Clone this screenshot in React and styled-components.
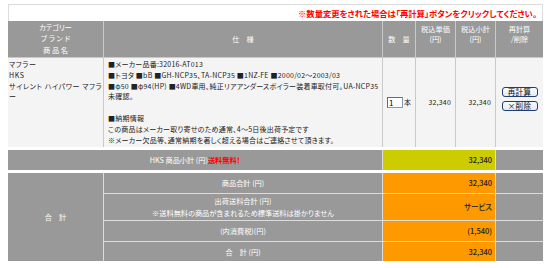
import React from "react";
import styled, { createGlobalStyle } from "styled-components";

const Global = createGlobalStyle`
  html, body { margin: 0; padding: 0; background: #fff; }
  body {
    font-family: "Noto Sans CJK JP", "Liberation Sans", sans-serif;
    font-feature-settings: "palt";
    font-size: 7.5px;
    color: #222;
  }
`;

const Page = styled.div`
  padding: 4px 7px 0 8px;
  width: 535px;
`;

const Notice = styled.div`
  height: 17px;
  box-sizing: border-box;
  border: 1px solid #dcdcdc;
  border-bottom: none;
  background: #fff;
  display: flex;
  align-items: center;
  justify-content: flex-end;
  padding-right: 5px;
  color: #f00;
  font-weight: bold;
  font-size: 8.3px;
`;

const Grid = styled.div`
  display: grid;
  grid-template-columns: 95px 278px 32px 39px 39px 47px;
  gap: 1px;
  background: ${(p) => p.$line || "#d6d6d6"};
  margin-top: ${(p) => p.$top || 0}px;
`;

const Head = styled.div`
  background: #999;
  color: #fff;
  height: 36px;
  display: flex;
  align-items: center;
  justify-content: center;
  text-align: center;
  line-height: ${(p) => p.$lh || 10}px;
  padding-bottom: ${(p) => p.$lift || 0}px;
  box-sizing: border-box;
  font-size: 7.2px;
`;

const Cell = styled.div`
  background: #f4f4f4;
  height: 89px;
  box-sizing: border-box;
  padding: 1px ${(p) => p.$pad ?? 2}px;
  line-height: 10.8px;
  font-size: 7px;
  letter-spacing: ${(p) => p.$ls ?? 0.22}px;
  white-space: nowrap;
  overflow: hidden;
`;

const MidCell = styled(Cell)`
  display: flex;
  align-items: center;
  justify-content: ${(p) => p.$justify || "flex-end"};
  padding: 0 ${(p) => p.$pr ?? 4}px 0 ${(p) => p.$pl ?? 0}px;
  letter-spacing: 0.2px;
`;

const Qty = styled.div`
  width: 16px;
  height: 11px;
  box-sizing: border-box;
  border: 1px solid #7f9db9;
  border-top-color: #5a6e8a;
  border-left-color: #5a6e8a;
  background: #fff;
  font-size: 8px;
  line-height: 9px;
  padding-left: 1px;
  margin-right: 1px;
  color: #000;
`;

const ButtonCol = styled(Cell)`
  display: flex;
  flex-direction: column;
  align-items: center;
  justify-content: center;
  gap: 4px;
  padding: 0 0 8px;
`;

const Btn = styled.button`
  width: 36px;
  height: 10px;
  padding: 0;
  border: 1px solid #1f3d6e;
  border-radius: 3px;
  background: linear-gradient(#fbfcff, #e4e9f3);
  font-family: inherit;
  font-feature-settings: "palt";
  font-size: 7.5px;
  line-height: 8px;
  letter-spacing: 0.3px;
  color: #111;
`;

const Band = styled.div`
  background: ${(p) => p.$bg || "#999"};
  height: ${(p) => p.$h || 20}px;
  grid-column: ${(p) => p.$col || "auto"};
  grid-row: ${(p) => p.$row || "auto"};
  display: flex;
  align-items: center;
  justify-content: ${(p) => p.$justify || "center"};
  text-align: center;
  padding-right: ${(p) => p.$pr || 0}px;
  color: ${(p) => p.$color || "#fff"};
  line-height: 12px;
  font-size: 7.2px;
  box-sizing: border-box;
`;

const Red = styled.span`
  color: #f00;
  font-weight: bold;
`;

const Value = styled.span`
  color: #222;
  font-weight: 500;
  font-size: 7.5px;
`;

export default function App() {
  return (
    <>
      <Global />
      <Page>
        <Notice>※数量変更をされた場合は「再計算」ボタンをクリックしてください。</Notice>
        <Grid $line="#c9c9c9">
          <Head $lh={11.5}>
            カテゴリー
            <br />
            ブ ラ ン ド
            <br />
            商 品 名
          </Head>
          <Head>仕　様</Head>
          <Head>数　量</Head>
          <Head $lift={10}>
            税込単価
            <br />
            (円)
          </Head>
          <Head $lift={10}>
            税込小計
            <br />
            (円)
          </Head>
          <Head $lift={10}>
            再計算
            <br />
            /削除
          </Head>

          <Cell $pad={1} $ls={0.6}>
            マフラー
            <br />
            HKS
            <br />
            サイレント ハイパワー マフラ
            <br />ー
          </Cell>
          <Cell $pad={4}>
            ■メーカー品番:32016-AT013
            <br />
            ■トヨタ ■bB ■GH-NCP35、TA-NCP35 ■1NZ-FE ■2000/02～2003/03
            <br />
            ■φ50 ■φ94(HP) ■4WD車用、純正リアアンダースポイラー装着車取付可。UA-NCP35
            <br />
            未確認。
            <br />
            <br />
            ■納期情報
            <br />
            この商品はメーカー取り寄せのため通常、4～5日後出荷予定です
            <br />
            ※メーカー欠品等、通常納期を著しく超える場合はご連絡させて頂きます。
          </Cell>
          <MidCell $justify="flex-start" $pl={4} $pr={0}>
            <Qty>1</Qty>
            <span>本</span>
          </MidCell>
          <MidCell>32,340</MidCell>
          <MidCell>32,340</MidCell>
          <ButtonCol>
            <Btn>再計算</Btn>
            <Btn>×削除</Btn>
          </ButtonCol>
        </Grid>

        <Grid $line="#dcdcdc" $top={3}>
          <Band $col="span 2" $h={20}>
            HKS 商品小計 (円)<Red>送料無料！</Red>
          </Band>
          <Band $col="span 3" $bg="#cccc00" $justify="flex-end" $pr={3}>
            <Value>32,340</Value>
          </Band>
          <Band />
        </Grid>

        <Grid $line="#dcdcdc" $top={3}>
          <Band $row="1 / span 4" $h={88}>
            合　計
          </Band>
          <Band>商品合計 (円)</Band>
          <Band $col="span 3" $bg="#ff9900" $justify="flex-end" $pr={3}>
            <Value>32,340</Value>
          </Band>
          <Band />

          <Band $h={26}>
            出荷送料合計 (円)
            <br />
            ※送料無料の商品が含まれるため標準送料は掛かりません
          </Band>
          <Band $h={26} $col="span 3" $bg="#ff9900" $justify="flex-end" $pr={3}>
            <Value>サービス</Value>
          </Band>
          <Band $h={26} />

          <Band>(内消費税)(円)</Band>
          <Band $col="span 3" $bg="#ff9900" $justify="flex-end" $pr={3}>
            <Value>(1,540)</Value>
          </Band>
          <Band />

          <Band $h={19}>合　計 (円)</Band>
          <Band $h={19} $col="span 3" $bg="#ff9900" $justify="flex-end" $pr={3}>
            <Value>32,340</Value>
          </Band>
          <Band $h={19} />
        </Grid>
      </Page>
    </>
  );
}
